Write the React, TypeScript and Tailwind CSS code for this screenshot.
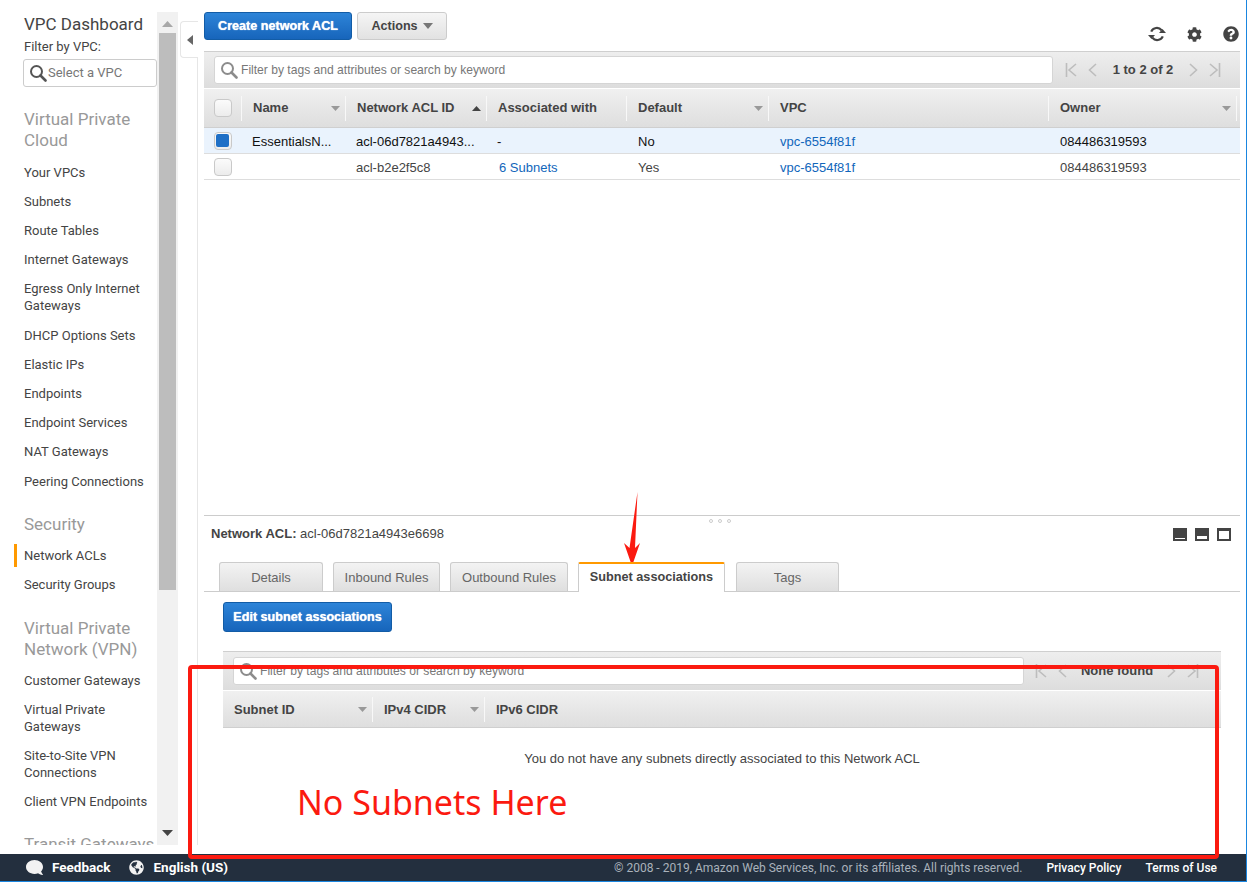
import React from "react";
import { FaCog, FaQuestionCircle, FaComment, FaGlobeAmericas } from "react-icons/fa";

const Search = ({ dark = false }: { dark?: boolean }) => (
  <svg width="18" height="18" viewBox="0 0 18 18" fill="none" className="shrink-0">
    <circle cx="7.5" cy="7.5" r="5.5" stroke={dark ? "#555" : "#8c8c8c"} strokeWidth="2" />
    <path d="M11.5 11.5L16.5 16.5" stroke={dark ? "#555" : "#8c8c8c"} strokeWidth="2.6" strokeLinecap="round" />
  </svg>
);

const Tri = ({ up = false, cls = "" }: { up?: boolean; cls?: string }) => (
  <svg width="9" height="5" viewBox="0 0 9 5" className={cls}>
    <path d={up ? "M4.5 0L9 5H0Z" : "M0 0H9L4.5 5Z"} fill={up ? "#444" : "#999"} />
  </svg>
);

const Refresh = () => (
  <svg width="18" height="16" viewBox="0 0 18 16" fill="none">
    <path d="M3.2 5.6A6.2 6.2 0 0 1 13.6 4.2" stroke="#444" strokeWidth="2.2" />
    <path d="M14.8 10.4A6.2 6.2 0 0 1 4.4 11.8" stroke="#444" strokeWidth="2.2" />
    <path d="M11 7H18L14.5 3Z" fill="#444" transform="rotate(0)" />
    <path d="M0 9H7L3.5 13Z" fill="#444" />
  </svg>
);

const Pager = ({ label, w }: { label: string; w: string }) => {
  const s = { stroke: "#bdbdbd", strokeWidth: 1.6, fill: "none" };
  return (
    <div className="flex items-center text-[13px] font-bold text-[#444]">
      <svg width="13" height="14" viewBox="0 0 13 14" className="mr-[10px]">
        <path d="M1.5 0V14M11 1L4 7L11 13" {...s} />
      </svg>
      <svg width="9" height="14" viewBox="0 0 9 14">
        <path d="M8 1L1.5 7L8 13" {...s} />
      </svg>
      <span className={`${w} text-center`}>{label}</span>
      <svg width="9" height="14" viewBox="0 0 9 14">
        <path d="M1 1L7.5 7L1 13" {...s} />
      </svg>
      <svg width="13" height="14" viewBox="0 0 13 14" className="ml-[10px]">
        <path d="M11.5 0V14M2 1L9 7L2 13" {...s} />
      </svg>
    </div>
  );
};

const FilterBar = ({ children, inputW, bar }: { children: React.ReactNode; inputW: string; bar: string }) => (
  <div className={`flex items-center ${bar} border-t border-[#cfcfcf] bg-linear-to-b from-[#eeeeee] to-[#dddddd] pl-[10px]`}>
    <div className={`flex h-[28px] ${inputW} items-center gap-[3px] rounded-[3px] border border-[#d5d5d5] bg-white pl-[5px] text-[12.1px] text-[#777]`}>
      <Search />
      <span>Filter by tags and attributes or search by keyword</span>
    </div>
    {children}
  </div>
);

const Head = ({ w, label, arrow, sep = true, up = false }: { w: string; label: string; arrow?: boolean; sep?: boolean; up?: boolean }) => (
  <div className={`flex ${w} h-[25px] items-center ${sep ? "border-r border-[#f8f8f8]" : ""} pl-[11px] pr-[5px]`}>
    <span className="text-[13px] font-bold text-[#444]">{label}</span>
    {arrow && <Tri up={up} cls="ml-auto" />}
  </div>
);

const Check = ({ on = false }: { on?: boolean }) => (
  <span className="flex h-[18px] w-[18px] items-center justify-center rounded-[4px] border border-[#c9c9c9] bg-linear-to-b from-[#fbfbfb] to-[#ececec]">
    {on && <span className="h-[13px] w-[13px] rounded-[2px] bg-[#1e6fc6]" />}
  </span>
);

const Row = ({ on, c }: { on?: boolean; c: (string | null)[] }) => {
  const widths = ["w-[104px]", "w-[141px]", "w-[141px]", "w-[142px]", "w-[280px]", "w-[180px]"];
  return (
    <div className={`flex h-[26px] items-center border-b border-[#dddddd] pt-[2px] text-[13px] ${on ? "bg-[#eaf3fd] text-[#111]" : "text-[#444]"}`}>
      <div className="-mt-[2px] flex w-[38px] justify-center pr-[1px]"><Check on={on} /></div>
      {c.map((t, i) => {
        const link = t === "6 Subnets" || (t ?? "").startsWith("vpc-");
        return (
          <div key={i} className={`${widths[i]} truncate ${t === "6 Subnets" ? "pl-[12px]" : "pl-[10px]"} ${link ? "text-[#1166bb]" : ""}`}>{t}</div>
        );
      })}
    </div>
  );
};

const Nav = ({ children, active, cls = "" }: { children: React.ReactNode; active?: boolean; cls?: string }) => (
  <div className={`relative w-[126px] text-[13px] leading-[17px] text-[#444] ${cls}`}>
    {active && <span className="absolute left-[-10px] top-[-3px] h-[23px] w-[3px] bg-[#ff9900]" />}
    {children}
  </div>
);

const Group = ({ children, cls }: { children: React.ReactNode; cls: string }) => (
  <div className={`${cls} text-[17px] leading-[21px] text-[#999]`}>{children}</div>
);

const Tab = ({ w, label, active }: { w: string; label: string; active?: boolean }) =>
  active ? (
    <div className={`${w} relative z-10 -mb-px mr-px flex h-[30px] items-center justify-center rounded-t-[2px] border-x border-t-2 border-x-[#cccccc] border-t-[#ff9900] bg-white text-[12.7px] font-bold text-[#444]`}>
      {label}
    </div>
  ) : (
    <div className={`${w} flex h-[29px] items-center justify-center rounded-t-[3px] border-x border-t border-[#cccccc] bg-linear-to-b from-[#f3f3f3] to-[#dfdfdf] pt-[2px] text-[13px] text-[#666]`}>
      {label}
    </div>
  );

const BlueBtn = ({ w, h, label }: { w: string; h: string; label: string }) => (
  <button className={`${w} ${h} rounded-[3px] border border-[#125ca6] bg-linear-to-b from-[#2d84d8] to-[#1765bb] text-[12.6px] font-bold text-white [text-shadow:0_0_1px_#fff]`}>
    {label}
  </button>
);

const PaneIcon = ({ top, bottom }: { top: number; bottom: number }) => (
  <svg width="14" height="13" viewBox="0 0 14 13">
    <rect width="14" height="13" fill="#444" />
    <rect x="2" y={top} width="10" height={bottom} fill="#fff" />
  </svg>
);

export default function App() {
  return (
    <div className="relative flex h-[882px] w-[1247px] flex-col overflow-hidden border-r border-r-[#1a86e0] bg-white font-['Liberation_Sans',Arial,sans-serif]">
      <div className="flex h-[854px] pb-[9px] pt-[12px]">
        {/* sidebar */}
        <div className="flex w-[178px] shrink-0">
          <div className="h-[833px] w-[157px] overflow-hidden pl-[24px] pr-[2px] pt-[3px] font-['Roboto',sans-serif]">
            <div className="text-[17px] leading-[19px] text-[#444]">VPC Dashboard</div>
            <div className="mt-[4px] text-[13px] leading-[17px] text-[#444]">Filter by VPC:</div>
            <div className="-ml-px mt-[4px] flex h-[28px] w-[134px] items-center gap-[1px] rounded-[3px] border border-[#cccccc] pl-[5px] text-[13px] text-[#777]">
              <Search dark />
              <span>Select a VPC</span>
            </div>
            <Group cls="mt-[22px]">Virtual Private Cloud</Group>
            <div className="mt-[13px] flex flex-col gap-[12px]">
              <Nav>Your VPCs</Nav>
              <Nav>Subnets</Nav>
              <Nav>Route Tables</Nav>
              <Nav>Internet Gateways</Nav>
              <Nav>Egress Only Internet Gateways</Nav>
              <Nav cls="mt-px">DHCP Options Sets</Nav>
              <Nav>Elastic IPs</Nav>
              <Nav>Endpoints</Nav>
              <Nav>Endpoint Services</Nav>
              <Nav>NAT Gateways</Nav>
              <Nav cls="mt-px">Peering Connections</Nav>
            </div>
            <Group cls="mt-[24px]">Security</Group>
            <div className="mt-[12px] flex flex-col gap-[12px]">
              <Nav active>Network ACLs</Nav>
              <Nav>Security Groups</Nav>
            </div>
            <Group cls="mt-[25px]">Virtual Private Network (VPN)</Group>
            <div className="mt-[12px] flex flex-col gap-[12px]">
              <Nav>Customer Gateways</Nav>
              <Nav>Virtual Private Gateways</Nav>
              <Nav>Site-to-Site VPN Connections</Nav>
              <Nav>Client VPN Endpoints</Nav>
            </div>
            <Group cls="mt-[24px] whitespace-nowrap">Transit Gateways</Group>
          </div>
          <div className="flex h-[833px] w-[21px] flex-col items-center bg-[#f1f1f1]">
            <svg width="11" height="6" viewBox="0 0 11 6" className="mt-[9px]">
              <path d="M5.5 0L11 6H0Z" fill="#a8a8a8" />
            </svg>
            <div className="mt-[6px] h-[557px] w-[17px] bg-[#bdbdbd]" />
            <svg width="11" height="6" viewBox="0 0 11 6" className="mb-[9px] mt-auto">
              <path d="M0 0H11L5.5 6Z" fill="#444" />
            </svg>
          </div>
        </div>
        {/* collapse handle */}
        <div className="flex w-[20px] shrink-0 flex-col">
          <div className="ml-[2px] mt-[9px] flex h-[37px] w-[18px] items-center justify-center rounded-l-[4px] border border-r-0 border-[#e6e6e6]">
            <svg width="6" height="10" viewBox="0 0 6 10"><path d="M6 0V10L0 5Z" fill="#666" /></svg>
          </div>
          <div className="flex-1 border-r border-[#e6e6e6]" />
        </div>
        {/* main */}
        <div className="flex w-[1042px] shrink-0 flex-col pl-[6px]">
          <div className="flex h-[39px] items-start">
            <BlueBtn w="w-[148px]" h="h-[28px]" label="Create network ACL" />
            <button className="ml-[5px] flex h-[28px] w-[90px] items-center justify-center gap-[5px] rounded-[3px] border border-[#cccccc] bg-linear-to-b from-[#f5f5f5] to-[#e2e2e2] text-[12.6px] font-bold text-[#444]">
              Actions
              <svg width="10" height="6" viewBox="0 0 10 6"><path d="M0 0H10L5 6Z" fill="#777" /></svg>
            </button>
            <div className="ml-auto mt-[14px] flex items-center gap-[21px] pr-[1px] text-[#444]">
              <Refresh />
              <FaCog size={15} />
              <FaQuestionCircle size={16} />
            </div>
          </div>

          <FilterBar inputW="w-[839px]" bar="h-[37px]">
            <div className="ml-[12px]"><Pager label="1 to 2 of 2" w="w-[92px]" /></div>
          </FilterBar>
          <div className="flex h-[40px] items-center border-y border-y-[#cfcfcf] border-t-white bg-linear-to-b from-[#f0f0f0] to-[#dedede]">
            <div className="flex h-[25px] w-[38px] items-center justify-center border-r border-[#f8f8f8]"><Check /></div>
            <Head w="w-[104px]" label="Name" arrow />
            <Head w="w-[141px]" label="Network ACL ID" arrow up />
            <Head w="w-[140px]" label="Associated with" />
            <Head w="w-[142px]" label="Default" arrow />
            <Head w="w-[280px]" label="VPC" />
            <Head w="w-[188px]" label="Owner" arrow />
          </div>
          <Row on c={["EssentialsN...", "acl-06d7821a4943...", "-", "No", "vpc-6554f81f", "084486319593"]} />
          <Row c={[null, "acl-b2e2f5c8", "6 Subnets", "Yes", "vpc-6554f81f", "084486319593"]} />

          <div className="mt-[335px] flex h-[47px] items-center justify-between border-t border-[#cccccc] pb-[12px] pl-[7px] pr-[9px] pt-[2px] text-[13px] text-[#444]">
            <div><b>Network ACL:</b> acl-06d7821a4943e6698</div>
            <div className="flex gap-[8px]">
              <PaneIcon top={10} bottom={1} />
              <PaneIcon top={8} bottom={3} />
              <PaneIcon top={3} bottom={8} />
            </div>
          </div>
          <div className="flex h-[30px] items-end gap-[10px] border-b border-[#cccccc] pl-[15px]">
            <Tab w="w-[104px]" label="Details" />
            <Tab w="w-[107px]" label="Inbound Rules" />
            <Tab w="w-[118px]" label="Outbound Rules" />
            <Tab w="w-[147px]" label="Subnet associations" active />
            <Tab w="w-[103px]" label="Tags" />
          </div>
          <div className="ml-[19px] mt-[10px]">
            <BlueBtn w="w-[169px]" h="h-[30px]" label="Edit subnet associations" />
          </div>
          <div className="ml-[19px] mt-[19px] w-[998px]">
            <FilterBar inputW="w-[791px]" bar="h-[39px]">
              <div className="ml-[11px]"><Pager label="None found" w="w-[100px]" /></div>
            </FilterBar>
            <div className="flex h-[38px] items-center border-y border-y-[#cfcfcf] border-t-white bg-linear-to-b from-[#f0f0f0] to-[#dedede] pt-[1px]">
              <Head w="w-[150px]" label="Subnet ID" arrow />
              <Head w="w-[112px]" label="IPv4 CIDR" arrow />
              <Head w="w-[120px]" label="IPv6 CIDR" sep={false} />
            </div>
            <div className="pt-[22px] text-center text-[13px] leading-[17px] text-[#444]">
              You do not have any subnets directly associated to this Network ACL
            </div>
          </div>
        </div>
      </div>

      {/* footer */}
      <div className="flex h-[28px] items-center border-b border-b-[#1a86e0] bg-[#232f3e] pl-[26px] pr-[29px] font-['Roboto',sans-serif] text-[13.5px] text-white">
        <FaComment size={17} className="-scale-x-100 text-[#f2f2f2]" />
        <span className="ml-[9px] font-bold">Feedback</span>
        <FaGlobeAmericas size={15} className="ml-[18px] text-[#f2f2f2]" />
        <span className="ml-[10px] font-bold">English (US)</span>
        <span className="ml-auto text-[12px] text-[#aab2bb]">© 2008 - 2019, Amazon Web Services, Inc. or its affiliates. All rights reserved.</span>
        <span className="ml-[24px] text-[12px] font-medium">Privacy Policy</span>
        <span className="ml-[24px] text-[12px] font-medium">Terms of Use</span>
      </div>

      {/* drag dots */}
      <div className="absolute left-[709px] top-[519px] flex gap-[5px]">
        <span className="h-[4px] w-[4px] rounded-full border border-[#cccccc]" />
        <span className="h-[4px] w-[4px] rounded-full border border-[#cccccc]" />
        <span className="h-[4px] w-[4px] rounded-full border border-[#cccccc]" />
      </div>

      {/* red annotations */}
      <div className="absolute left-[188px] top-[665px] h-[194px] w-[1031px] rounded-[4px] border-[4px] border-[#fb1a10]" />
      <div className="absolute left-[297px] top-[778px] font-['Noto_Sans',sans-serif] text-[34px] leading-[48px] text-[#fb1a10]">No Subnets Here</div>
      <svg className="absolute left-[620px] top-[490px]" width="24" height="78" viewBox="0 0 24 78">
        <path d="M17.5 2L15 58L20 53L12 76L4 53L9.5 58Z" fill="#fb1a10" />
      </svg>
    </div>
  );
}
